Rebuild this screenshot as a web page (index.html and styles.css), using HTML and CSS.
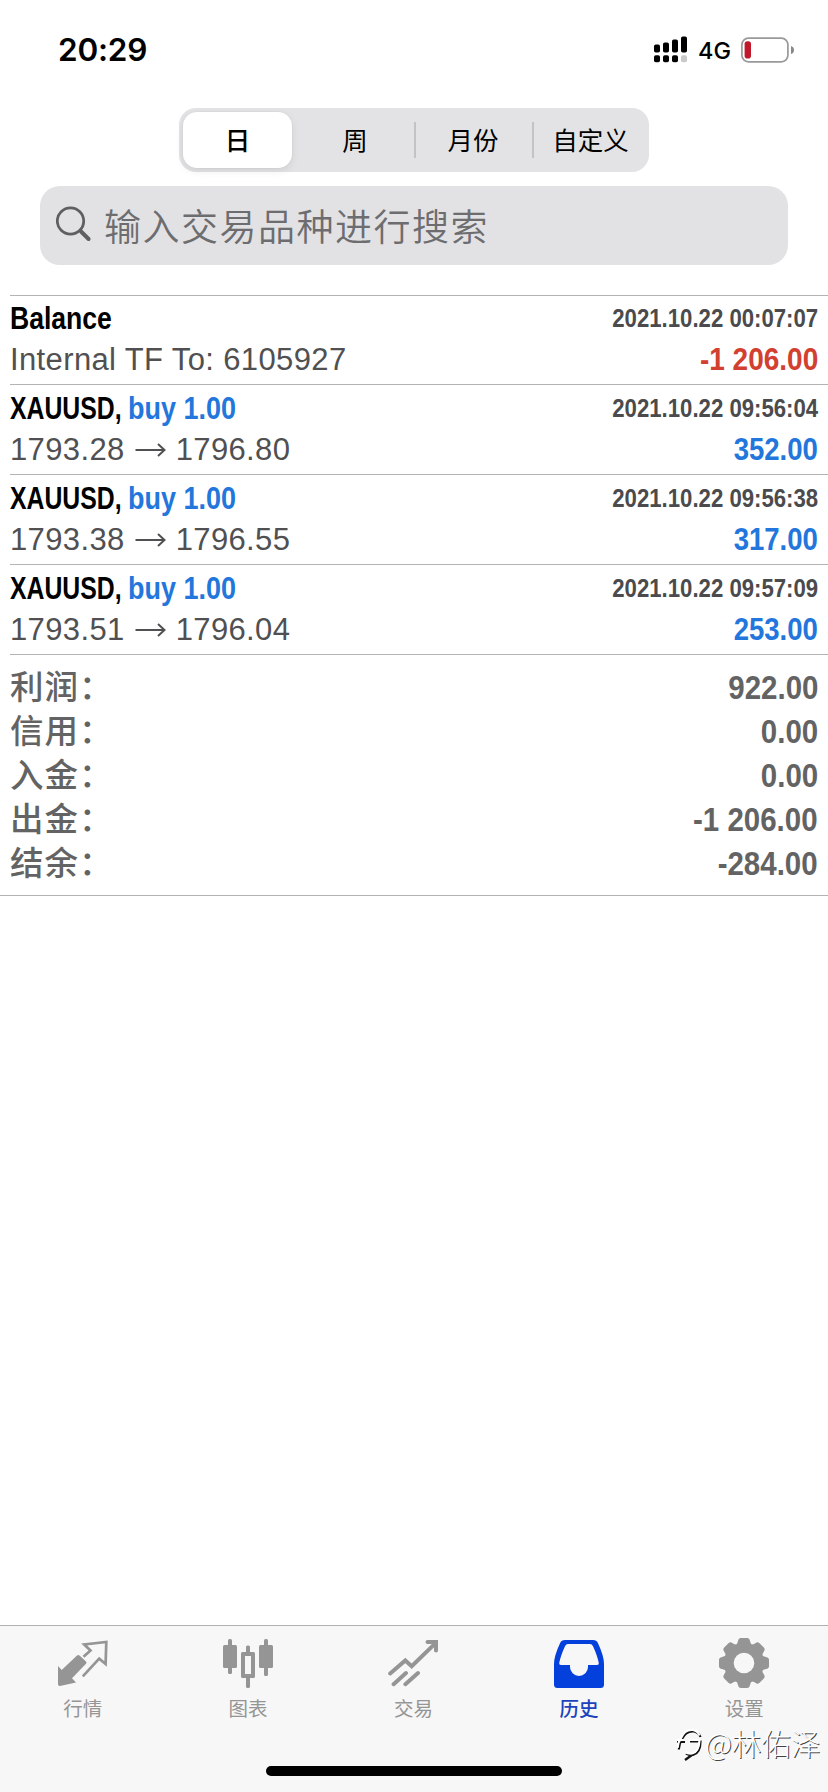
FILE: index.html
```html
<!DOCTYPE html>
<html lang="zh-CN">
<head>
<meta charset="utf-8">
<title>历史</title>
<link rel="stylesheet" href="styles.css">
</head>
<body>
<div class="screen">
  <header class="status">
    <span class="time">20:29</span>
    <div class="status-right">
      <svg class="signal" width="34" height="27" viewBox="0 0 34 27">
        <rect x="0" y="8.5" width="6" height="8" rx="1.8"/><rect x="9" y="6.5" width="6" height="10" rx="1.8"/><rect x="18" y="3.5" width="6" height="13" rx="1.8"/><rect x="27" y="0.5" width="6" height="16" rx="1.8"/>
        <rect x="0" y="19.3" width="6" height="7" rx="1.8"/><rect x="9" y="19.3" width="6" height="7" rx="1.8"/><rect x="18" y="19.3" width="6" height="7" rx="1.8"/><rect x="27" y="19.3" width="6" height="7" rx="1.8" fill="#c9c9c9"/>
      </svg>
      <span class="net">4G</span>
      <svg class="battery" width="54" height="26" viewBox="0 0 54 26">
        <rect x="0.9" y="1.2" width="46" height="23.6" rx="6.5" fill="none" stroke="#999" stroke-width="1.7"/>
        <rect x="3.6" y="4.3" width="6.4" height="17.2" rx="2.8" fill="#c2182b"/>
        <path d="M50 9q3 1 3 4t-3 4z" fill="#888"/>
      </svg>
    </div>
  </header>

  <nav class="segments">
    <span class="seg active">日</span><span class="seg week">周</span><span class="seg ruled">月份</span><span class="seg ruled">自定义</span>
  </nav>

  <div class="search">
    <svg width="37" height="37" viewBox="0 0 37 37" fill="none" stroke="#5f5f61" stroke-linecap="round">
      <circle cx="14.500" cy="15" r="13.2" stroke-width="2.8"/><path d="M25 25.5l7.600 7.500" stroke-width="4"/>
    </svg>
    <span class="placeholder">输入交易品种进行搜索</span>
  </div>

  <main class="deals">
    <section class="deal">
      <div class="line"><span class="name wide">Balance</span><span class="date">2021.10.22 00:07:07</span></div>
      <div class="line"><span class="detail">Internal TF To: 6105927</span><span class="value loss">-1 206.00</span></div>
    </section>
    <section class="deal">
      <div class="line"><span class="name">XAUUSD,</span><span class="side">buy 1.00</span><span class="date">2021.10.22 09:56:04</span></div>
      <div class="line"><span class="detail">1793.28</span><svg class="arrow" viewBox="0 0 31 16"><path d="M.5 8H29M23 2l6.5 6L23 14"/></svg><span class="detail">1796.80</span><span class="value">352.00</span></div>
    </section>
    <section class="deal">
      <div class="line"><span class="name">XAUUSD,</span><span class="side">buy 1.00</span><span class="date">2021.10.22 09:56:38</span></div>
      <div class="line"><span class="detail">1793.38</span><svg class="arrow" viewBox="0 0 31 16"><path d="M.5 8H29M23 2l6.5 6L23 14"/></svg><span class="detail">1796.55</span><span class="value">317.00</span></div>
    </section>
    <section class="deal">
      <div class="line"><span class="name">XAUUSD,</span><span class="side">buy 1.00</span><span class="date">2021.10.22 09:57:09</span></div>
      <div class="line"><span class="detail">1793.51</span><svg class="arrow" viewBox="0 0 31 16"><path d="M.5 8H29M23 2l6.5 6L23 14"/></svg><span class="detail">1796.04</span><span class="value">253.00</span></div>
    </section>
  </main>

  <section class="summary">
    <div class="total"><span class="label">利润：</span><span class="amount">922.00</span></div>
    <div class="total"><span class="label">信用：</span><span class="amount">0.00</span></div>
    <div class="total"><span class="label">入金：</span><span class="amount">0.00</span></div>
    <div class="total"><span class="label">出金：</span><span class="amount">-1 206.00</span></div>
    <div class="total"><span class="label">结余：</span><span class="amount">-284.00</span></div>
  </section>

  <footer class="tabbar">
    <nav class="tabs">
      <a class="tab">
        <svg class="icon" viewBox="0 0 50 50"><path fill="currentColor" d="M0 28l3.700 4L19 17.600q1.300-1 2.500 0l6.500 5.900q1 1.200 0 2.300L14 40.300l4 4.200L2 48q-2 .2-2-2z"/><path fill="none" stroke="currentColor" stroke-width="2.700" d="M25.500 18.700l7-6.200-6.300-6L48.300 4 47.600 26l-6.400-5.300L24.800 38.300"/></svg>
        <span>行情</span>
      </a>
      <a class="tab">
        <svg class="icon" viewBox="0 0 50 50" fill="currentColor"><rect y="7" width="14" height="23" rx="1.5"/><rect x="5" y="1" width="4" height="35" rx="1.5"/><rect x="36" y="7" width="14" height="23" rx="1.5"/><rect x="41" y="1" width="4" height="37" rx="1.5"/><rect x="23" y="7.5" width="4" height="10" rx="1.5"/><rect x="23" y="37" width="4" height="13" rx="1.5"/><path fill-rule="evenodd" d="M19.500 14h11q1.500 0 1.500 1.500v23q0 1.500-1.500 1.500h-11q-1.500 0-1.500-1.500v-23q0-1.500 1.500-1.500zM22 18v18h6V18z"/></svg>
        <span>图表</span>
      </a>
      <a class="tab">
        <svg class="icon" viewBox="0 0 50 50" fill="none" stroke="currentColor" stroke-width="4" stroke-linecap="round"><path d="M2.200 35.500L17.300 22.500l6.400 5.700L47 5.600M5.600 46.200L18 35M17.400 46.200L30 35"/><path d="M39.500 4H48v8.500"/></svg>
        <span>交易</span>
      </a>
      <a class="tab selected">
        <svg class="icon" viewBox="0 0 50 50"><path fill="currentColor" fill-rule="evenodd" d="M11 2h28q3.600 0 5 3.200Q50 18 50 26v20.500q0 3.500-3.500 3.500h-43Q0 50 0 46.500V26Q0 18 6 5.200 7.400 2 11 2zM14 6q-2 0-3 2.200Q6.500 18 5.200 25q-.3 2 1.800 2h9v2a9 9 0 0 0 18 0v-2h9q2.100 0 1.800-2Q43.500 18 39 8.200 38 6 36 6z"/></svg>
        <span>历史</span>
      </a>
      <a class="tab">
        <svg class="icon" viewBox="-25 -25 50 50"><g fill="currentColor"><path id="tooth" d="M-9-17.500Q-6.500-18.500-6-22-5.500-25-3-25h6q2.500 0 3 3 .5 3.500 3 4.500v35Q6.500 18.500 6 22q-.5 3-3 3h-6q-2.500 0-3-3-.5-3.500-3-4.500z"/><use href="#tooth" transform="rotate(45)"/><use href="#tooth" transform="rotate(90)"/><use href="#tooth" transform="rotate(135)"/></g><circle r="10.300" fill="#f7f7f7"/></svg>
        <span>设置</span>
      </a>
    </nav>
    <div class="home"></div>
  </footer>

  <div class="watermark">
    <svg width="28" height="36" viewBox="0 0 28 36" fill="none"><path id="swirl" stroke="#111" stroke-width="2.200" d="M1.800 23.500Q2.500 17 5 13 9 4.500 17 5.500q5 1 6.500 5.500M0 16h8M13 15.500h10.500Q23.500 27 16 29q-4 .5-7-1.500M15 29l-7 5"/><path stroke="#fff" stroke-width="2.200" d="M.5 22Q1 16 4 12 8 3 16 4q5 1 6.500 5.500M0 14h7M12 14h10.500Q22 26 15 27.500q-4 .5-7-1.500"/></svg>
    <span>@林佑泽</span>
  </div>
</div>
</body>
</html>
```
FILE: styles.css
```css
* { box-sizing: border-box; }
body { margin: 0; background: #fff; font-family: "Liberation Sans", "Noto Sans CJK SC", sans-serif; }
.screen { position: relative; width: 828px; height: 1792px; display: flex; flex-direction: column; overflow: hidden; white-space: nowrap; }

.status { height: 108px; padding: 0 33px 9px 58px; display: flex; align-items: center; justify-content: space-between; font-family: Inter, sans-serif; color: #000; }
.time { font-size: 31.5px; font-weight: 600; letter-spacing: -.2px; }
.status-right { display: flex; align-items: center; }
.net { font-size: 23.5px; font-weight: 500; width: 43px; margin-left: 10px; padding-top: 3px; line-height: 26px; }

.segments { align-self: center; width: 470px; height: 64px; padding: 4px 0 4px 4px; border-radius: 17px; background: #e3e3e5; display: grid; grid-template-columns: 109px 122px 118px 117px; font-family: "Noto Sans CJK SC", sans-serif; font-size: 25.5px; color: #000; }
.seg { display: flex; align-items: center; justify-content: center; padding-bottom: 3px; }
.seg.active { background: #fff; border-radius: 14px; font-weight: 500; box-shadow: 0 3px 8px rgba(0,0,0,.08), 0 0 2px rgba(0,0,0,.08); }
.seg.week { padding-left: 4px; }
.seg.ruled { background: linear-gradient(#c3c3c6, #c3c3c6) 0 50% / 2px 36px no-repeat; }

.search { margin: 14px 40px 0; height: 79px; border-radius: 20px; background: #e2e2e4; display: flex; align-items: center; padding: 0 0 2px 16px; gap: 11px; }
.placeholder { font-family: "Noto Sans CJK SC", sans-serif; font-size: 37px; font-weight: 350; letter-spacing: 1.5px; color: #6d6d70; line-height: 60px; }

.deals { margin: 30px 0 0 10px; border-bottom: 1px solid #b4b4b4; }
.deal { height: 90px; border-top: 1px solid #b4b4b4; padding: 3px 10px 0 0; }
.deal:first-child { height: 89px; padding-top: 2px; }
.line { height: 41px; line-height: 41px; display: flex; font-size: 31px; }
.name, .side { font-weight: 700; transform-origin: left; }
.name { width: 118px; transform: scaleX(.8); color: #000; }
.name.wide { transform: scaleX(.857); }
.side { transform: scaleX(.87); color: #2376dc; }
.date { margin-left: auto; font-size: 25px; font-weight: 700; color: #4b4b4d; transform: scaleX(.887); transform-origin: right; }
.detail { color: #505052; letter-spacing: .37px; }
.value { margin-left: auto; font-size: 32px; font-weight: 700; color: #2376dc; transform: scaleX(.86); transform-origin: right; }
.value.loss { color: #d2402f; transform: scaleX(.875); }
.arrow { width: 31px; height: 16px; margin: 13px 10px 0 10px; fill: none; stroke: #505052; stroke-width: 2; }

.summary { padding: 11px 10px 9px; border-bottom: 1px solid #b4b4b4; color: #636363; }
.total { height: 44px; line-height: 44px; display: flex; justify-content: space-between; }
.label { font-family: "Noto Sans CJK SC", sans-serif; font-size: 33.5px; font-weight: 500; letter-spacing: 1px; line-height: 38px; }
.amount { font-size: 33.5px; font-weight: 700; transform: scaleX(.88); transform-origin: right; }

.tabbar { margin-top: auto; height: 167px; background: #f7f7f7; border-top: 1px solid #b1b1b1; display: flex; flex-direction: column; align-items: center; }
.tabs { align-self: flex-start; width: 827px; height: 140px; padding-top: 12px; display: grid; grid-template-columns: repeat(5, 1fr); }
.tab { display: flex; flex-direction: column; align-items: center; color: #959595; font-family: "Noto Sans CJK SC", sans-serif; font-size: 19.5px; line-height: 24px; gap: 8px; }
.tab.selected { color: #0440dc; }
.tab.selected span { color: #1d43bd; font-weight: 500; }
.icon { width: 50px; height: 50px; }
.home { width: 296px; height: 10px; border-radius: 5px; background: #000; }

.watermark { position: absolute; left: 677px; top: 1726px; display: flex; align-items: flex-start; color: #fff; font-family: "Noto Sans CJK SC", sans-serif; font-size: 29.5px; font-weight: 300; line-height: 32px; text-shadow: 1px 1px 0 #444; }
```
